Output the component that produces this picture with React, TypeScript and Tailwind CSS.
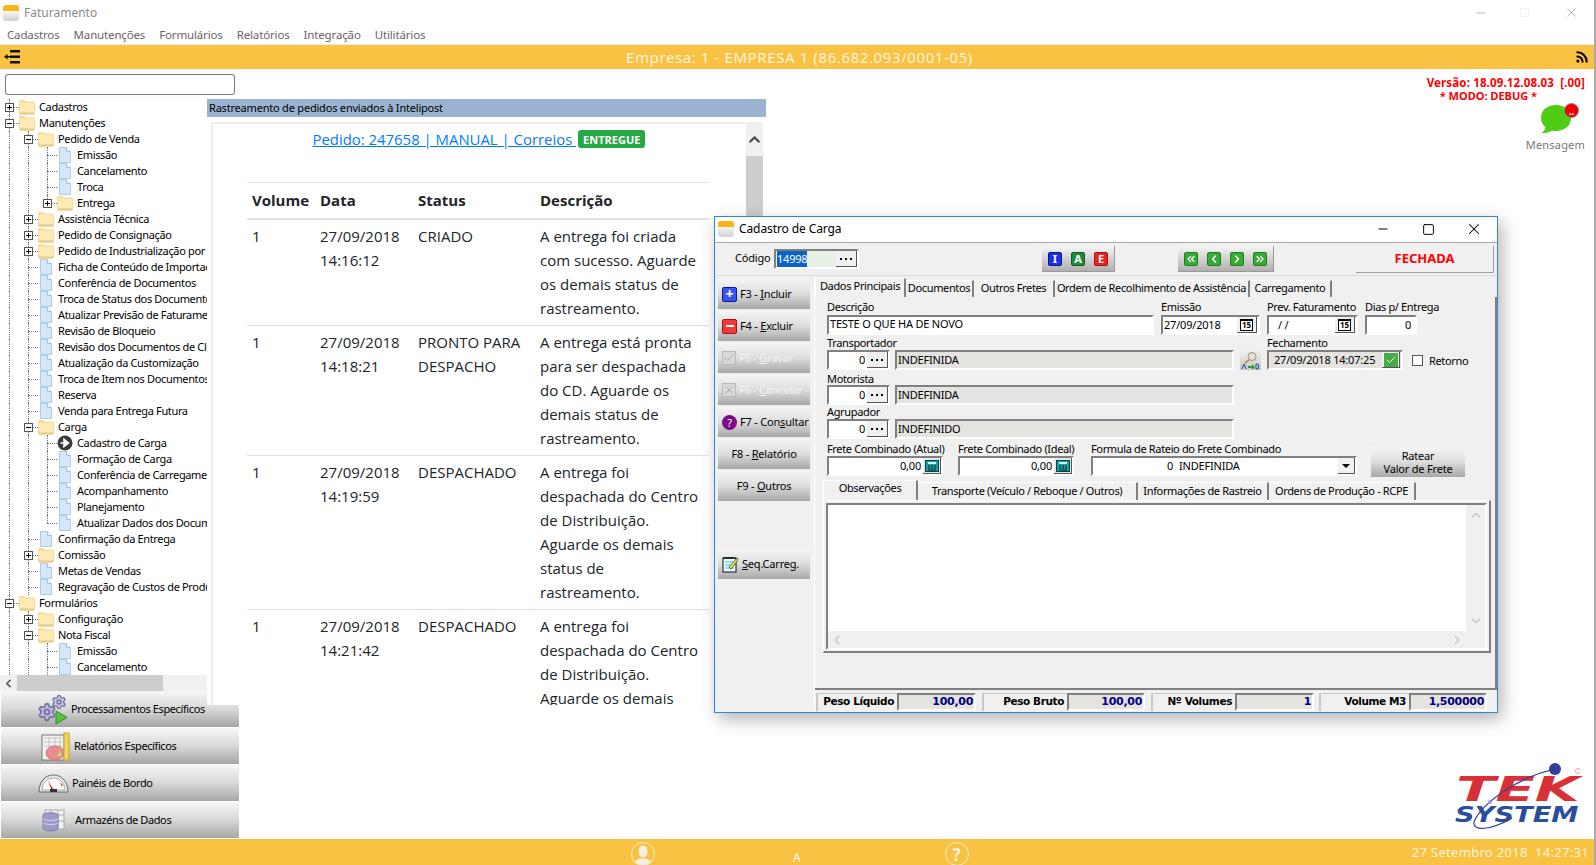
import type { ReactNode } from 'react';
import { Rss, X, Minus, Square, Settings, ChevronUp, ChevronDown, ChevronLeft, ChevronRight, ChevronsLeft, ChevronsRight, Check } from 'lucide-react';

type TreeRow = { l: number; t: string; k: 'f' | 'd' | 'a'; e?: '+' | '-'; last?: boolean };

const tree: TreeRow[] = [
  { l: 0, t: 'Cadastros', k: 'f', e: '+' },
  { l: 0, t: 'Manutenções', k: 'f', e: '-' },
  { l: 1, t: 'Pedido de Venda', k: 'f', e: '-' },
  { l: 2, t: 'Emissão', k: 'd' },
  { l: 2, t: 'Cancelamento', k: 'd' },
  { l: 2, t: 'Troca', k: 'd' },
  { l: 2, t: 'Entrega', k: 'f', e: '+', last: true },
  { l: 1, t: 'Assistência Técnica', k: 'f', e: '+' },
  { l: 1, t: 'Pedido de Consignação', k: 'f', e: '+' },
  { l: 1, t: 'Pedido de Industrialização por Beneficiamento', k: 'f', e: '+' },
  { l: 1, t: 'Ficha de Conteúdo de Importação', k: 'd' },
  { l: 1, t: 'Conferência de Documentos', k: 'd' },
  { l: 1, t: 'Troca de Status dos Documentos', k: 'd' },
  { l: 1, t: 'Atualizar Previsão de Faturamento', k: 'd' },
  { l: 1, t: 'Revisão de Bloqueio', k: 'd' },
  { l: 1, t: 'Revisão dos Documentos de Cliente', k: 'd' },
  { l: 1, t: 'Atualização da Customização', k: 'd' },
  { l: 1, t: 'Troca de Item nos Documentos', k: 'd' },
  { l: 1, t: 'Reserva', k: 'd' },
  { l: 1, t: 'Venda para Entrega Futura', k: 'd' },
  { l: 1, t: 'Carga', k: 'f', e: '-' },
  { l: 2, t: 'Cadastro de Carga', k: 'a' },
  { l: 2, t: 'Formação de Carga', k: 'd' },
  { l: 2, t: 'Conferência de Carregamento', k: 'd' },
  { l: 2, t: 'Acompanhamento', k: 'd' },
  { l: 2, t: 'Planejamento', k: 'd' },
  { l: 2, t: 'Atualizar Dados dos Documentos', k: 'd', last: true },
  { l: 1, t: 'Confirmação da Entrega', k: 'd' },
  { l: 1, t: 'Comissão', k: 'f', e: '+' },
  { l: 1, t: 'Metas de Vendas', k: 'd' },
  { l: 1, t: 'Regravação de Custos de Produtos', k: 'd' },
  { l: 0, t: 'Formulários', k: 'f', e: '-' },
  { l: 1, t: 'Configuração', k: 'f', e: '+' },
  { l: 1, t: 'Nota Fiscal', k: 'f', e: '-' },
  { l: 2, t: 'Emissão', k: 'd' },
  { l: 2, t: 'Cancelamento', k: 'd' },
];

const events = [
  { date: '14:16:12', status: ['CRIADO'], desc: ['A entrega foi criada', 'com sucesso. Aguarde', 'os demais status de', 'rastreamento.'] },
  { date: '14:18:21', status: ['PRONTO PARA', 'DESPACHO'], desc: ['A entrega está pronta', 'para ser despachada', 'do CD. Aguarde os', 'demais status de', 'rastreamento.'] },
  { date: '14:19:59', status: ['DESPACHADO'], desc: ['A entrega foi', 'despachada do Centro', 'de Distribuição.', 'Aguarde os demais', 'status de', 'rastreamento.'] },
  { date: '14:21:42', status: ['DESPACHADO'], desc: ['A entrega foi', 'despachada do Centro', 'de Distribuição.', 'Aguarde os demais', 'status de', 'rastreamento.'] },
];

function FolderIcon() {
  return (
    <svg width="16" height="16" viewBox="0 0 16 16" className="shrink-0">
      <path d="M0.500 1.500h5l1.500 1.500h8.500v12h-15z" fill="#fbe098" stroke="#f4dc9c" />
      <rect x="1" y="4" width="14" height="9.500" fill="#fdeab4" />
      <rect x="1" y="13.500" width="14" height="2" fill="#e6cc88" />
    </svg>
  );
}

function DocIcon() {
  return (
    <svg width="16" height="16" viewBox="0 0 16 16" className="shrink-0">
      <path d="M2.500 0.500h7l4 4v11h-11z" fill="#d5e7f8" stroke="#a9cbec" />
      <path d="M9.500 0.500v4h4" fill="#f3f8fd" stroke="#9cc2e6" />
    </svg>
  );
}

function ActiveIcon() {
  return (
    <svg width="16" height="16" viewBox="0 0 16 16" className="shrink-0">
      <circle cx="8" cy="8" r="7.500" fill="#3a3a3a" />
      <path d="M3.500 8h6M7 4.500L11.500 8 7 11.500z" fill="#fff" stroke="#fff" strokeWidth="1.600" />
    </svg>
  );
}

function TreeItem({ row }: { row: TreeRow }) {
  const indents = Array.from({ length: row.l });
  return (
    <div className="flex h-4 items-center whitespace-nowrap text-black">
      {indents.map((_, i) => (
        <div key={i} className="ml-[9px] h-4 w-[10px] shrink-0 border-l border-dotted border-[#777]" />
      ))}
      <div className="relative h-4 w-[19px] shrink-0">
        <div className={`absolute left-[9px] top-0 border-l border-dotted border-[#777] ${row.last ? 'h-2' : 'h-4'}`} />
        <div className="absolute left-[9px] top-2 w-[10px] border-t border-dotted border-[#777]" />
        {row.e && (
          <div className="absolute left-[5px] top-[4px] flex h-[9px] w-[9px] items-center justify-center border border-[#555] bg-white">
            <div className="h-px w-[5px] bg-black" />
            {row.e === '+' && <div className="absolute h-[5px] w-px bg-black" />}
          </div>
        )}
      </div>
      {row.k === 'f' && <FolderIcon />}
      {row.k === 'd' && <DocIcon />}
      {row.k === 'a' && <ActiveIcon />}
      <span className="ml-1 text-[11px] tracking-[-0.35px]">{row.t}</span>
    </div>
  );
}

function CogsIcon() {
  return (
    <div className="relative h-[30px] w-[31px]">
      <Settings className="absolute left-0 top-[8px] h-[20px] w-[20px] fill-[#b9b9dc] text-[#7070a0]" />
      <Settings className="absolute left-[14px] top-0 h-[16px] w-[16px] fill-[#c9c9e4] text-[#7070a0]" />
      <svg className="absolute left-[18px] top-[16px]" width="13" height="15" viewBox="0 0 13 15">
        <path d="M1 1l11 6.500L1 14z" fill="#5cc23e" stroke="#2c8f2c" />
      </svg>
    </div>
  );
}

function ReportIcon() {
  return (
    <svg width="29" height="29" viewBox="0 0 29 29">
      <rect x="1" y="3" width="22" height="25" fill="#f3f3f3" stroke="#777" />
      <path d="M3 6h18M3 10h18M3 14h18M8 5v14M14 5v14M19 5v14" stroke="#c4c4c4" />
      <ellipse cx="14" cy="21" rx="9" ry="7" fill="#ec8d8d" stroke="#c77" />
      <path d="M16 24l3-5 2 5z" fill="#c6d88c" />
      <rect x="23" y="1" width="5" height="27" fill="#efd665" stroke="#c9a514" />
    </svg>
  );
}

function GaugeIcon() {
  return (
    <svg width="31" height="19" viewBox="0 0 31 19">
      <path d="M1 18C1 8 7 1 15.500 1S30 8 30 18z" fill="#e8e8e8" stroke="#666" />
      <path d="M4 16C4 9 9 4 15.500 4S27 9 27 16z" fill="#fff" stroke="#aaa" />
      <path d="M10 7l6 9-2 1z" fill="#c92a2a" />
      <path d="M22 8l3 3-1 2z" fill="#d9482b" />
      <rect x="12" y="15" width="7" height="3" fill="#333" />
    </svg>
  );
}

function DataIcon() {
  return (
    <svg width="23" height="23" viewBox="0 0 23 23">
      <rect x="3" y="1" width="19" height="19" fill="#f2f2f2" stroke="#aaa" />
      <path d="M3 6h19M3 12h19M9 1v19M16 1v19" stroke="#aaa" />
      <path d="M1 6c0-3 15-3 15 0v13c0 4-15 4-15 0z" fill="#9c9ccc" stroke="#7c7cb0" />
      <path d="M1 10c3 2 12 2 15 0M1 14c3 2 12 2 15 0" stroke="#d8d8f0" fill="none" />
    </svg>
  );
}

function SideButton({ icon, label, pad, gap }: { icon: ReactNode; label: string; pad: string; gap: string }) {
  return (
    <div className={`flex h-9 w-[238px] items-center bg-linear-to-b from-[#f7f7f7] via-[#d8d8d8] to-[#a6a6a6] text-[11px] tracking-[-0.4px] text-black ${pad} ${gap}`}>
      {icon}
      <span>{label}</span>
    </div>
  );
}

function FKey({ children, icon, disabled }: { children: ReactNode; icon?: ReactNode; disabled?: boolean }) {
  return (
    <div
      className={`flex h-[30px] w-[92px] items-center gap-[3px] whitespace-nowrap bg-linear-to-b from-[#f6f6f6] via-[#dcdcdc] to-[#a8a8a8] text-[11px] tracking-[-0.2px] ${
        icon ? 'justify-start pl-[4px]' : 'justify-center'
      } ${disabled ? 'text-[#f4f4f4]' : 'text-black'}`}
    >
      {icon}
      <span>{children}</span>
    </div>
  );
}

function Sunken({ className, children }: { className: string; children?: ReactNode }) {
  return (
    <div
      className={`flex items-center overflow-hidden whitespace-nowrap border-2 border-b-white border-l-[#808080] border-r-white border-t-[#808080] px-px text-[11px] tracking-[-0.2px] text-black ${className}`}
    >
      {children}
    </div>
  );
}

function Label({ children, className = 'h-[14px] leading-[14px]' }: { children: ReactNode; className?: string }) {
  return <div className={`whitespace-nowrap text-[11px] tracking-[-0.35px] text-black ${className}`}>{children}</div>;
}

function Dots() {
  return (
    <div className="flex h-4 w-[21px] shrink-0 items-center justify-center gap-[3px] border-b border-r border-b-[#555] border-r-[#555] bg-[#f0f0f0]">
      <i className="h-[2px] w-[2px] bg-black" />
      <i className="h-[2px] w-[2px] bg-black" />
      <i className="h-[2px] w-[2px] bg-black" />
    </div>
  );
}

function CalButton() {
  return (
    <div className="ml-auto flex h-4 w-5 shrink-0 items-center justify-center border-b border-r border-[#555] bg-[#f0f0f0]">
      <div className="flex h-[12px] w-[13px] items-center justify-center border border-t-2 border-black bg-white text-[8px] font-bold leading-none tracking-normal">15</div>
    </div>
  );
}

function CalcButton() {
  return (
    <div className="ml-auto flex h-4 w-[18px] shrink-0 items-center justify-center border-b border-r border-[#555] bg-[#e8e8e8]">
      <svg width="14" height="12" viewBox="0 0 14 12">
        <rect x="0.500" y="0.500" width="13" height="11" fill="#1d9fa0" stroke="#044" />
        <rect x="3" y="2" width="8" height="2" fill="#bff" />
        <path d="M3 6h2M6 6h2M9 6h2M3 8h2M6 8h2M9 8h2M3 10h8" stroke="#123" />
      </svg>
    </div>
  );
}

function SquareBtn({ bg, children }: { bg: string; children: ReactNode }) {
  return (
    <div className={`flex h-[14px] w-[14px] items-center justify-center rounded-[2px] border text-[11px] font-bold leading-none text-white ${bg}`}>{children}</div>
  );
}

function Tab({ children, active, w, h }: { children: ReactNode; active?: boolean; w: string; h: string }) {
  return (
    <div
      className={`flex shrink-0 justify-center whitespace-nowrap border-r-2 border-r-[#808080] text-[11px] leading-[14px] tracking-[-0.35px] text-black ${h} ${w} ${
        active ? 'items-start border-l border-t border-l-white border-t-white bg-[#f0f0f0]' : 'mt-[2px] items-center border-t border-t-white pb-[2px]'
      }`}
    >
      {children}
    </div>
  );
}

function StatusCell({ label, value, lw, vw }: { label: string; value: string; lw: string; vw: string }) {
  return (
    <div className="flex h-[18px] items-center font-bold">
      <div className={`flex h-[18px] items-center justify-end whitespace-nowrap border-l-2 border-t border-l-[#c8c8c8] border-t-[#c8c8c8] pr-[3px] font-['DejaVu_Sans',sans-serif] text-[10.5px] tracking-[-0.4px] text-black ${lw}`}>
        {label}
      </div>
      <div className={`flex h-[18px] items-center justify-end border-2 border-b-white border-l-[#808080] border-r-white border-t-[#808080] bg-[#e4e3df] pr-px pt-px font-['DejaVu_Sans',sans-serif] text-[11px] tracking-[-0.3px] text-[#000080] ${vw}`}>
        {value}
      </div>
    </div>
  );
}

function FormDialog() {
  return (
    <div className="absolute left-[714px] top-[216px] z-30 flex h-[497px] w-[784px] flex-col border border-[#2b89d6] bg-[#f0f0f0] shadow-[4px_6px_16px_rgba(0,0,0,0.3)]">
      {/* title bar */}
      <div className="flex h-[26px] shrink-0 items-center border-b border-[#a8a8a8] bg-white pb-px pl-[3px]">
        <AppIcon />
        <span className="mb-px ml-[5px] text-[12px] tracking-[-0.1px] text-black">Cadastro de Carga</span>
        <div className="ml-auto mr-[14px] flex items-center">
          <Minus className="h-[14px] w-[14px] text-black" strokeWidth={1.7} />
          <Square className="ml-[32px] h-[13px] w-[13px] text-black" strokeWidth={1.8} />
          <X className="ml-[30px] h-[18px] w-[18px] text-black" strokeWidth={1.4} />
        </div>
      </div>
      {/* codigo + actions */}
      <div className="flex h-[33px] shrink-0 items-center border-b border-b-[#dcdcdc]">
        <span className="mb-[2px] ml-[20px] w-[39px] text-[11px] tracking-[-0.2px] text-black">Código</span>
        <div className="flex h-5 w-[85px] items-center border-2 border-b-white border-l-[#808080] border-r-white border-t-[#808080] bg-[#e8f0e4] text-[11px] tracking-[-0.2px]">
          <span className="ml-px bg-[#0a64c8] text-white">14998</span>
          <div className="ml-auto">
            <Dots />
          </div>
        </div>
        <div className="ml-[183px] flex h-[26px] w-[73px] items-center justify-center gap-[9px] border-b border-r border-[#999] bg-linear-to-b from-[#f6f6f6] to-[#b0b0b0]">
          <SquareBtn bg="bg-[#1c2ee8] border-[#0b1690]">I</SquareBtn>
          <SquareBtn bg="bg-[#1e8b3a] border-[#0d5c22]">A</SquareBtn>
          <SquareBtn bg="bg-[#ee2222] border-[#a80f0f]">E</SquareBtn>
        </div>
        <div className="ml-[63px] flex h-[26px] w-[96px] items-center justify-center gap-[9px] border-b border-r border-[#999] bg-linear-to-b from-[#f6f6f6] to-[#b0b0b0]">
          <SquareBtn bg="bg-[#35ab35] border-[#1f7f1f]"><ChevronsLeft className="h-3 w-3" strokeWidth={2.5} /></SquareBtn>
          <SquareBtn bg="bg-[#35ab35] border-[#1f7f1f]"><ChevronLeft className="h-3 w-3" strokeWidth={3} /></SquareBtn>
          <SquareBtn bg="bg-[#35ab35] border-[#1f7f1f]"><ChevronRight className="h-3 w-3" strokeWidth={3} /></SquareBtn>
          <SquareBtn bg="bg-[#35ab35] border-[#1f7f1f]"><ChevronsRight className="h-3 w-3" strokeWidth={2.5} /></SquareBtn>
        </div>
        <div className="ml-[82px] flex h-[27px] w-[138px] items-center justify-center border-b border-r border-[#a0a0a0] border-l-white border-t-white text-[13px] font-bold text-[#ff0000]">
          FECHADA
        </div>
      </div>
      <div className="flex min-h-0 flex-1">
        {/* function keys */}
        <div className="flex w-[99px] shrink-0 flex-col gap-[2px] pl-[3px] pt-[3px]">
          <FKey
            icon={
              <span className="flex h-[15px] w-[15px] items-center justify-center rounded-[2px] border border-[#0b1690] bg-[#3a55ee] text-[14px] font-bold leading-none text-white">+</span>
            }
          >
            F3 - <u>I</u>ncluir
          </FKey>
          <FKey
            icon={
              <span className="flex h-[15px] w-[15px] items-center justify-center rounded-[2px] border border-[#a80f0f] bg-[#f03a3a]">
                <i className="h-[2px] w-2 bg-white" />
              </span>
            }
          >
            F4 - <u>E</u>xcluir
          </FKey>
          <FKey disabled icon={<span className="flex h-[14px] w-[14px] items-center justify-center border border-[#bbb] bg-[#d8d8d8]"><Check className="h-3 w-3 text-[#aaa]" /></span>}>
            F5 - <u>G</u>ravar
          </FKey>
          <FKey disabled icon={<span className="flex h-[14px] w-[14px] items-center justify-center border border-[#bbb] bg-[#d8d8d8]"><X className="h-3 w-3 text-[#aaa]" /></span>}>
            F6 - <u>C</u>ancelar
          </FKey>
          <FKey icon={<span className="flex h-[15px] w-[15px] items-center justify-center rounded-full bg-[#7a0a86] text-[11px] leading-none text-white">?</span>}>
            F7 - Con<u>s</u>ultar
          </FKey>
          <FKey>
            F8 - <u>R</u>elatório
          </FKey>
          <FKey>
            F9 - <u>O</u>utros
          </FKey>
          <div className="mt-[46px]">
            <FKey
              icon={
                <svg width="17" height="17" viewBox="0 0 17 17">
                  <rect x="1" y="2" width="13" height="14" fill="#e8fbff" stroke="#111" />
                  <path d="M1 2h13M3 1v2M5 1v2M7 1v2M9 1v2M11 1v2" stroke="#111" />
                  <path d="M3 6h9M3 9h9M3 12h9" stroke="#36c4d8" />
                  <path d="M7 11l8-9 1 2-7 9z" fill="#f6e84a" stroke="#111" strokeWidth="0.600" />
                </svg>
              }
            >
              <u>S</u>eq.Carreg.
            </FKey>
          </div>
        </div>
        {/* main area */}
        <div className="flex min-w-0 flex-1 flex-col border-l border-l-white">
          <div className="flex h-[21px] shrink-0 items-start pt-[2px]">
            <Tab active w="w-[91px]" h="h-[19px]">Dados Principais</Tab>
            <Tab w="w-[68px]" h="h-[17px]">Documentos</Tab>
            <Tab w="w-[81px]" h="h-[17px]">Outros Fretes</Tab>
            <Tab w="w-[195px]" h="h-[17px]">Ordem de Recolhimento de Assistência</Tab>
            <Tab w="w-[82px]" h="h-[17px]">Carregamento</Tab>
          </div>
          <div className="flex min-h-0 flex-1 flex-col border-b-2 border-r-2 border-b-[#808080] border-r-[#808080] pl-[12px] pt-[4px]">
            <div className="flex gap-[7px]">
              <div className="w-[327px]">
                <Label className="h-[14px] leading-[12px]">Descrição</Label>
                <Sunken className="h-5 bg-white pb-px">TESTE O QUE HA DE NOVO</Sunken>
              </div>
              <div className="w-[99px]">
                <Label className="h-[14px] leading-[12px]">Emissão</Label>
                <Sunken className="h-5 bg-white">
                  27/09/2018
                  <CalButton />
                </Sunken>
              </div>
              <div className="w-[91px]">
                <Label className="h-[14px] leading-[12px]">Prev. Faturamento</Label>
                <Sunken className="h-5 bg-white">
                  <span className="ml-2">/ /</span>
                  <CalButton />
                </Sunken>
              </div>
              <div className="w-[52px]">
                <Label className="h-[14px] leading-[12px]">Dias p/ Entrega</Label>
                <Sunken className="h-5 justify-end bg-white pr-1">0</Sunken>
              </div>
            </div>
            <div className="mt-px flex items-end">
              <div className="w-[63px]">
                <Label>Transportador</Label>
                <Sunken className="h-5 justify-end bg-white !px-0">
                  0
                  <div className="ml-[2px]"><Dots /></div>
                </Sunken>
              </div>
              <Sunken className="ml-[5px] h-5 w-[339px] bg-[#e4e3df]">INDEFINIDA</Sunken>
              <div className="ml-[6px] flex h-5 w-[21px] flex-col items-center justify-end bg-linear-to-b from-[#f0f0f0] to-[#c8c8c8]">
                <svg width="19" height="19" viewBox="0 0 19 19">
                  <circle cx="11" cy="5.500" r="4" fill="#cfe3f7" stroke="#c98a3a" />
                  <path d="M8 9l-4 3" stroke="#c98a3a" strokeWidth="1.600" />
                  <path d="M7 15h4v-2l3 3-3 3v-2H7z" fill="#2aa02a" />
                  <path d="M1 18l2-5 2 5M15 13v5h2l1-1-1-1 1-1-1-2z" fill="none" stroke="#0a3aa8" strokeWidth="0.900" />
                </svg>
              </div>
              <div className="ml-[6px] w-[136px]">
                <Label>Fechamento</Label>
                <Sunken className="h-5 bg-[#e4e3df] pl-[5px]">
                  27/09/2018 14:07:25
                  <div className="ml-auto flex h-4 w-[18px] shrink-0 items-center justify-center border-b border-r border-[#555] bg-[#f0f0f0]">
                    <span className="flex h-[14px] w-[14px] items-center justify-center bg-[#45ad45]">
                      <Check className="h-3 w-3 text-white" strokeWidth={2} />
                    </span>
                  </div>
                </Sunken>
              </div>
              <div className="mb-[4px] ml-[9px] h-[11px] w-[11px] border border-[#555] bg-white" />
              <span className="mb-[2px] ml-[6px] text-[11px] leading-[14px] tracking-[-0.35px] text-black">Retorno</span>
            </div>
            <div className="mt-[2px] flex items-end">
              <div className="w-[63px]">
                <Label className="h-[13px] leading-[14px]">Motorista</Label>
                <Sunken className="h-5 justify-end bg-white !px-0">
                  0
                  <div className="ml-[2px]"><Dots /></div>
                </Sunken>
              </div>
              <Sunken className="ml-[5px] h-5 w-[339px] bg-[#e4e3df]">INDEFINIDA</Sunken>
            </div>
            <div className="flex items-end">
              <div className="w-[63px]">
                <Label>Agrupador</Label>
                <Sunken className="h-5 justify-end bg-white !px-0">
                  0
                  <div className="ml-[2px]"><Dots /></div>
                </Sunken>
              </div>
              <Sunken className="ml-[5px] h-5 w-[339px] bg-[#e4e3df]">INDEFINIDO</Sunken>
            </div>
            <div className="mt-[3px] flex items-end">
              <div className="w-[116px]">
                <Label>Frete Combinado (Atual)</Label>
                <Sunken className="h-5 justify-end bg-white !px-0">
                  0,00
                  <div className="ml-[2px]"><CalcButton /></div>
                </Sunken>
              </div>
              <div className="ml-[15px] w-[116px]">
                <Label>Frete Combinado (Ideal)</Label>
                <Sunken className="h-5 justify-end bg-white !px-0">
                  0,00
                  <div className="ml-[2px]"><CalcButton /></div>
                </Sunken>
              </div>
              <div className="ml-[17px] w-[266px]">
                <Label>Formula de Rateio do Frete Combinado</Label>
                <Sunken className="h-5 bg-white !px-0">
                  <span className="w-[80px] text-right">0</span>
                  <span className="ml-[6px]">INDEFINIDA</span>
                  <div className="ml-auto flex h-4 w-[17px] items-center justify-center border-b border-r border-[#555] bg-[#f0f0f0]">
                    <i className="h-0 w-0 border-x-[4px] border-t-[4px] border-x-transparent border-t-black" />
                  </div>
                </Sunken>
              </div>
              <div className="-mb-px ml-[14px] flex h-[30px] w-[94px] flex-col items-center justify-center bg-linear-to-b from-[#f6f6f6] via-[#dcdcdc] to-[#a8a8a8] text-center text-[11px] leading-[13px] tracking-[-0.2px] text-black">
                <span>Ratear</span>
                <span>Valor de Frete</span>
              </div>
            </div>
            <div className="-ml-[4px] mt-[4px] flex h-5 shrink-0 items-start">
              <Tab active w="w-[95px]" h="h-[20px]">Observações</Tab>
              <Tab w="w-[220px]" h="h-[18px]">Transporte (Veículo / Reboque / Outros)</Tab>
              <Tab w="w-[131px]" h="h-[18px]">Informações de Rastreio</Tab>
              <Tab w="w-[147px]" h="h-[18px]">Ordens de Produção - RCPE</Tab>
            </div>
            <div className="-ml-[4px] h-[153px] w-[668px] border-b-2 border-l border-r-2 border-t border-b-[#808080] border-l-white border-r-[#808080] border-t-white p-[2px] pb-0">
              <div className="grid h-[147px] grid-cols-[1fr_19px] grid-rows-[1fr_17px] border-2 border-b-white border-l-[#808080] border-r-white border-t-[#808080]">
                <div className="bg-white" />
                <div className="flex flex-col items-center justify-between py-[3px] text-[#c8c8c8]">
                  <ChevronUp className="h-[14px] w-[14px]" strokeWidth={2.5} />
                  <ChevronDown className="h-[14px] w-[14px]" strokeWidth={2.5} />
                </div>
                <div className="flex items-center justify-between px-[2px] text-[#c8c8c8]">
                  <ChevronLeft className="h-[14px] w-[14px]" strokeWidth={2.5} />
                  <ChevronRight className="h-[14px] w-[14px]" strokeWidth={2.5} />
                </div>
                <div />
              </div>
            </div>
          </div>
          {/* totals */}
          <div className="flex h-[22px] shrink-0 items-center pl-[1px] pt-[1px]">
            <StatusCell label="Peso Líquido" value="100,00" lw="w-[81px]" vw="w-[79px]" />
            <div className="w-[6px]" />
            <StatusCell label="Peso Bruto" value="100,00" lw="w-[85px]" vw="w-[78px]" />
            <div className="w-[6px]" />
            <StatusCell label="Nº Volumes" value="1" lw="w-[84px]" vw="w-[79px]" />
            <div className="w-[5px]" />
            <StatusCell label="Volume M3" value="1,500000" lw="w-[90px]" vw="w-[78px]" />
          </div>
        </div>
      </div>
    </div>
  );
}

function AppIcon() {
  return (
    <div className="flex h-4 w-4 shrink-0 flex-col overflow-hidden rounded-[3px]">
      <div className="h-[6px] bg-[#fdb515]" />
      <div className="flex-1 bg-linear-to-b from-[#f6f6f6] to-[#d0d0d0]" />
    </div>
  );
}

function TrackingPanel() {
  return (
    <div className="relative z-10 h-[606px] w-[559px] bg-white">
      <div className="flex h-[18px] items-center bg-[#9ab3d0] pl-[2px] text-[11px] tracking-[-0.2px] text-black">Rastreamento de pedidos enviados à Intelipost</div>
      <div className="ml-1 mt-[5px] flex h-[583px]">
        <div className="h-full w-[534px] overflow-hidden border-l-2 border-t-2 border-l-[#ececec] border-t-[#ececec] font-['Open_Sans',sans-serif] text-[15px] leading-6 text-[#212529]">
          <div className="flex h-[58px] items-start justify-center pt-[3px]">
            <a className="whitespace-pre text-[14.9px] text-[#007bff] underline">Pedido: 247658 | MANUAL | Correios </a>
            <span className="ml-[2px] mt-[3px] flex h-[18px] items-center rounded-[3px] bg-[#28a745] px-[5px] text-[11px] font-bold leading-none text-white">ENTREGUE</span>
          </div>
          <table className="ml-[34px] w-[462px] table-fixed border-collapse">
            <colgroup>
              <col className="w-[68px]" />
              <col className="w-[98px]" />
              <col className="w-[122px]" />
              <col className="w-[174px]" />
            </colgroup>
            <thead>
              <tr className="h-[36px] border-b-2 border-t border-b-[#dee2e6] border-t-[#dee2e6] text-left">
                <th className="pl-[5px] font-bold">Volume</th>
                <th className="pl-[5px] font-bold">Data</th>
                <th className="pl-[5px] font-bold">Status</th>
                <th className="pl-[5px] font-bold">Descrição</th>
              </tr>
            </thead>
            <tbody>
              {events.map((ev) => (
                <tr key={ev.date} className="border-b border-[#dee2e6] align-top">
                  <td className="pb-[5px] pl-[5px] pt-1">1</td>
                  <td className="pb-[5px] pl-[5px] pt-1">
                    27/09/2018
                    <br />
                    {ev.date}
                  </td>
                  <td className="pb-[5px] pl-[5px] pt-1">
                    {ev.status.map((s) => (
                      <div key={s}>{s}</div>
                    ))}
                  </td>
                  <td className="whitespace-nowrap pb-[5px] pl-[5px] pt-1">
                    {ev.desc.map((d) => (
                      <div key={d}>{d}</div>
                    ))}
                  </td>
                </tr>
              ))}
            </tbody>
          </table>
        </div>
        <div className="ml-[1px] flex h-[120px] w-[17px] flex-col items-center bg-[#f0f0f0]">
          <div className="flex h-[34px] items-center">
            <ChevronUp className="h-[17px] w-[17px] text-[#505050]" strokeWidth={3} />
          </div>
          <div className="w-full flex-1 bg-[#cdcdcd]" />
        </div>
      </div>
    </div>
  );
}

function RightColumn() {
  return (
    <div className="flex min-w-0 flex-1 flex-col items-end pr-[9px]">
      <div className="mt-[7px] whitespace-pre text-[11.5px] font-bold leading-[13px] tracking-[0.15px] text-[#ff0000]">Versão: 18.09.12.08.03  [.00]</div>
      <div className="mr-[48px] text-[11px] font-bold leading-[13px] text-[#ff0000]">* MODO: DEBUG *</div>
      <div className="relative mr-[5px] mt-[1px] h-[32px] w-[40px]">
        <svg width="32" height="32" viewBox="0 0 32 32">
          <path d="M16 2c8.500 0 15 5 15 13s-7 13-15 13c-2 0-3-.3-4-.6C10 29 6 30 1 30c2-1 4-3 4.500-5.600C3 22 1 19 1 15 1 7 7.500 2 16 2z" fill="#4fcc14" />
        </svg>
        <div className="absolute right-[1px] top-0 flex h-[15px] w-[15px] items-center justify-center rounded-full border border-[#888] bg-[#f00000] text-[10px] font-bold leading-none text-white">..</div>
      </div>
      <div className="mt-[2px] text-[11px] tracking-[0.2px] text-[#777]">Mensagem</div>
      <div className="relative mb-px mr-[5px] mt-auto h-[76px] w-[128px] font-['DejaVu_Sans',sans-serif] italic">
        <span className="absolute left-[4px] top-[13px] h-[30px] origin-left scale-x-[1.75] text-[33px] font-bold leading-[30px] text-[#d92f36]">TEK</span>
        <span className="absolute left-[3px] top-[43px] origin-left scale-x-[1.3] text-[21px] font-bold leading-none text-[#2a4d9c]">SYSTEM</span>
        <svg className="absolute left-0 top-0" width="128" height="76" viewBox="0 0 128 76">
          <path d="M100 8C70 14 30 40 22 60c-2 10 18 8 38-4" fill="none" stroke="#3a3f9a" strokeWidth="1.200" />
          <circle cx="103" cy="7" r="6" fill="#333f9b" />
          <circle cx="38" cy="40" r="2" fill="#9aa0d0" />
          <circle cx="126" cy="9" r="2.500" fill="none" stroke="#f0a0a0" />
        </svg>
      </div>
    </div>
  );
}

export default function App() {
  return (
    <div className="relative flex h-[865px] w-full flex-col overflow-hidden border-r-2 border-r-[#aaaaaa] bg-white font-['Noto_Sans',sans-serif]">
      {/* window title */}
      <div className="flex h-[25px] shrink-0 items-center pl-[3px]">
        <AppIcon />
        <span className="ml-[5px] text-[12px] text-[#8a8a8a]">Faturamento</span>
        <div className="ml-auto flex items-center">
          <Minus className="h-[14px] w-[14px] text-[#888]" strokeWidth={1} />
          <Square className="ml-[31px] h-[11px] w-[11px] text-[#ddd]" strokeWidth={1} />
          <X className="ml-[34px] mr-[15px] h-[15px] w-[15px] text-[#888]" strokeWidth={1} />
        </div>
      </div>
      {/* menu */}
      <div className="flex h-[19px] shrink-0 items-center gap-[14px] pl-[7px] text-[11.5px] tracking-[-0.15px] text-[#666]">
        <span>Cadastros</span>
        <span>Manutenções</span>
        <span>Formulários</span>
        <span>Relatórios</span>
        <span>Integração</span>
        <span>Utilitários</span>
      </div>
      <div className="h-px shrink-0 bg-[#ededed]" />
      {/* company bar */}
      <div className="flex h-6 shrink-0 items-center bg-[#f9c242] px-1">
        <svg width="16" height="16" viewBox="0 0 16 16">
          <path d="M6 1h10v2.500H6zM6 6.500h10V9H6zM6 12h10v2.500H6z" fill="#111" />
          <path d="M0 7.700l3.500-2.700v2h3v1.500h-3v2z" fill="#111" />
        </svg>
        <div className="ml-[606px] text-[15px] tracking-[0.6px] text-[#fdf4dc]">Empresa: 1 - EMPRESA 1 (86.682.093/0001-05)</div>
        <Rss className="ml-auto mr-[1px] h-[14px] w-[14px] text-black" strokeWidth={3.5} />
      </div>
      {/* body */}
      <div className="flex min-h-0 flex-1">
        <div className="flex w-[766px] shrink-0 flex-col">
          <div className="flex h-[30px] w-[240px] shrink-0 items-center bg-[#fcfcfc] pl-[5px]">
            <div className="h-[21px] w-[230px] rounded-[3px] border border-[#777] bg-white" />
          </div>
          <div className="flex h-[592px] shrink-0">
            <div className="w-[207px] shrink-0">
              <div className="h-[576px] overflow-hidden">
                {tree.map((row, i) => (
                  <TreeItem key={i} row={row} />
                ))}
              </div>
              <div className="flex h-4 items-center bg-[#f0f0f0]">
                <ChevronLeft className="h-[15px] w-[15px] pl-[2px] text-[#505050]" strokeWidth={3} />
                <div className="ml-[2px] h-4 w-[146px] bg-[#cdcdcd]" />
              </div>
            </div>
            <TrackingPanel />
          </div>
          <div className="ml-px flex flex-col gap-px">
            <SideButton icon={<CogsIcon />} label="Processamentos Específicos" pad="pl-[36px]" gap="gap-[3px]" />
            <SideButton icon={<ReportIcon />} label="Relatórios Específicos" pad="pl-[40px]" gap="gap-[4px]" />
            <SideButton icon={<GaugeIcon />} label="Painéis de Bordo" pad="pl-[37px]" gap="gap-[3px]" />
            <SideButton icon={<DataIcon />} label="Armazéns de Dados" pad="pl-[41px]" gap="gap-[10px]" />
          </div>
        </div>
        <RightColumn />
      </div>
      {/* footer */}
      <div className="flex h-[26px] shrink-0 items-start overflow-hidden bg-[#f9c242]">
        <div className="ml-[631px] mt-[3px] h-6 w-6 shrink-0 overflow-hidden rounded-full border border-[#fdf0d0]">
          <svg width="22" height="22" viewBox="0 0 22 22">
            <ellipse cx="11" cy="8.500" rx="4.500" ry="6" fill="#f4f0e4" />
            <path d="M1 24c0-6 4-7 7-8.500h6c3 1.500 7 2.500 7 8.500z" fill="#f4f0e4" />
          </svg>
        </div>
        <span className="ml-[138px] mt-[11px] text-[12px] leading-4 text-white">A</span>
        <div className="ml-[144px] mt-[3px] flex h-6 w-6 shrink-0 items-center justify-center rounded-full border border-[#fdf0d0] text-[17px] font-bold leading-none text-[#f4f0e4]">?</div>
        <span className="ml-auto mr-[5px] mt-[4px] whitespace-pre text-[13px] tracking-[0.3px] text-[#fdf4dc]">27 Setembro 2018  14:27:31</span>
      </div>
      <FormDialog />
    </div>
  );
}
